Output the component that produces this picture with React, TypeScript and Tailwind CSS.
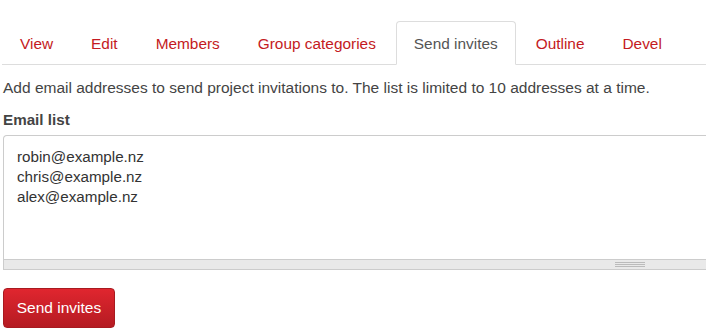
import { useState } from "react"

const tabs = ["View", "Edit", "Members", "Group categories", "Send invites", "Outline", "Devel"]

export default function App() {
  const [emails, setEmails] = useState("robin@example.nz\nchris@example.nz\nalex@example.nz")
  const active = "Send invites"
  return (
    <div className="w-[706px] h-[334px] overflow-hidden bg-white font-['Liberation_Sans',Arial,sans-serif] text-[#333]">
      <div className="pl-[3px] pt-[21px]">
        <ul className="flex -ml-px border-b border-[#ddd] text-[15.4px]">
          {tabs.map((tab) => (
            <li key={tab} className="mr-[2px] -mb-px">
              <a
                href="#"
                className={`block h-[44px] px-[17px] leading-[44px] rounded-t-[4px] border ${
                  tab === active
                    ? "border-[#ddd] border-b-white bg-white text-[#555]"
                    : "border-transparent text-[#c41a22]"
                }`}
              >
                {tab}
              </a>
            </li>
          ))}
        </ul>

        <p className="mt-[13px] text-[15.5px] leading-[20px] text-[#444]">
          Add email addresses to send project invitations to. The list is limited to 10 addresses at a time.
        </p>

        <label className="block mt-[12px] text-[15.2px] leading-[20px] font-bold text-[#444]">Email list</label>

        <div className="mt-[5px] w-[1260px]">
          <textarea
            value={emails}
            onChange={(e) => setEmails(e.target.value)}
            className="block w-full h-[124px] resize-none rounded-tl-[4px] border border-[#ccc] border-b-0 px-[13px] pt-[11px] pb-[9px] text-[15.2px] leading-[20px] text-[#333] outline-none"
          />
          <div className="flex h-[11px] items-center justify-start border border-[#ccc] bg-[#e9e9e9]">
            <div className="ml-[611px] flex flex-col gap-[1px]">
              <div className="h-px w-[30px] bg-[#bbb]" />
              <div className="h-px w-[30px] bg-[#bbb]" />
              <div className="h-px w-[30px] bg-[#bbb]" />
            </div>
          </div>
        </div>

        <button className="mt-[18px] h-[40px] w-[112px] rounded-[4px] border border-[#a81a20] bg-gradient-to-b from-[#e0262f] to-[#b51b22] text-[15.5px] text-white">
          Send invites
        </button>
      </div>
    </div>
  )
}
